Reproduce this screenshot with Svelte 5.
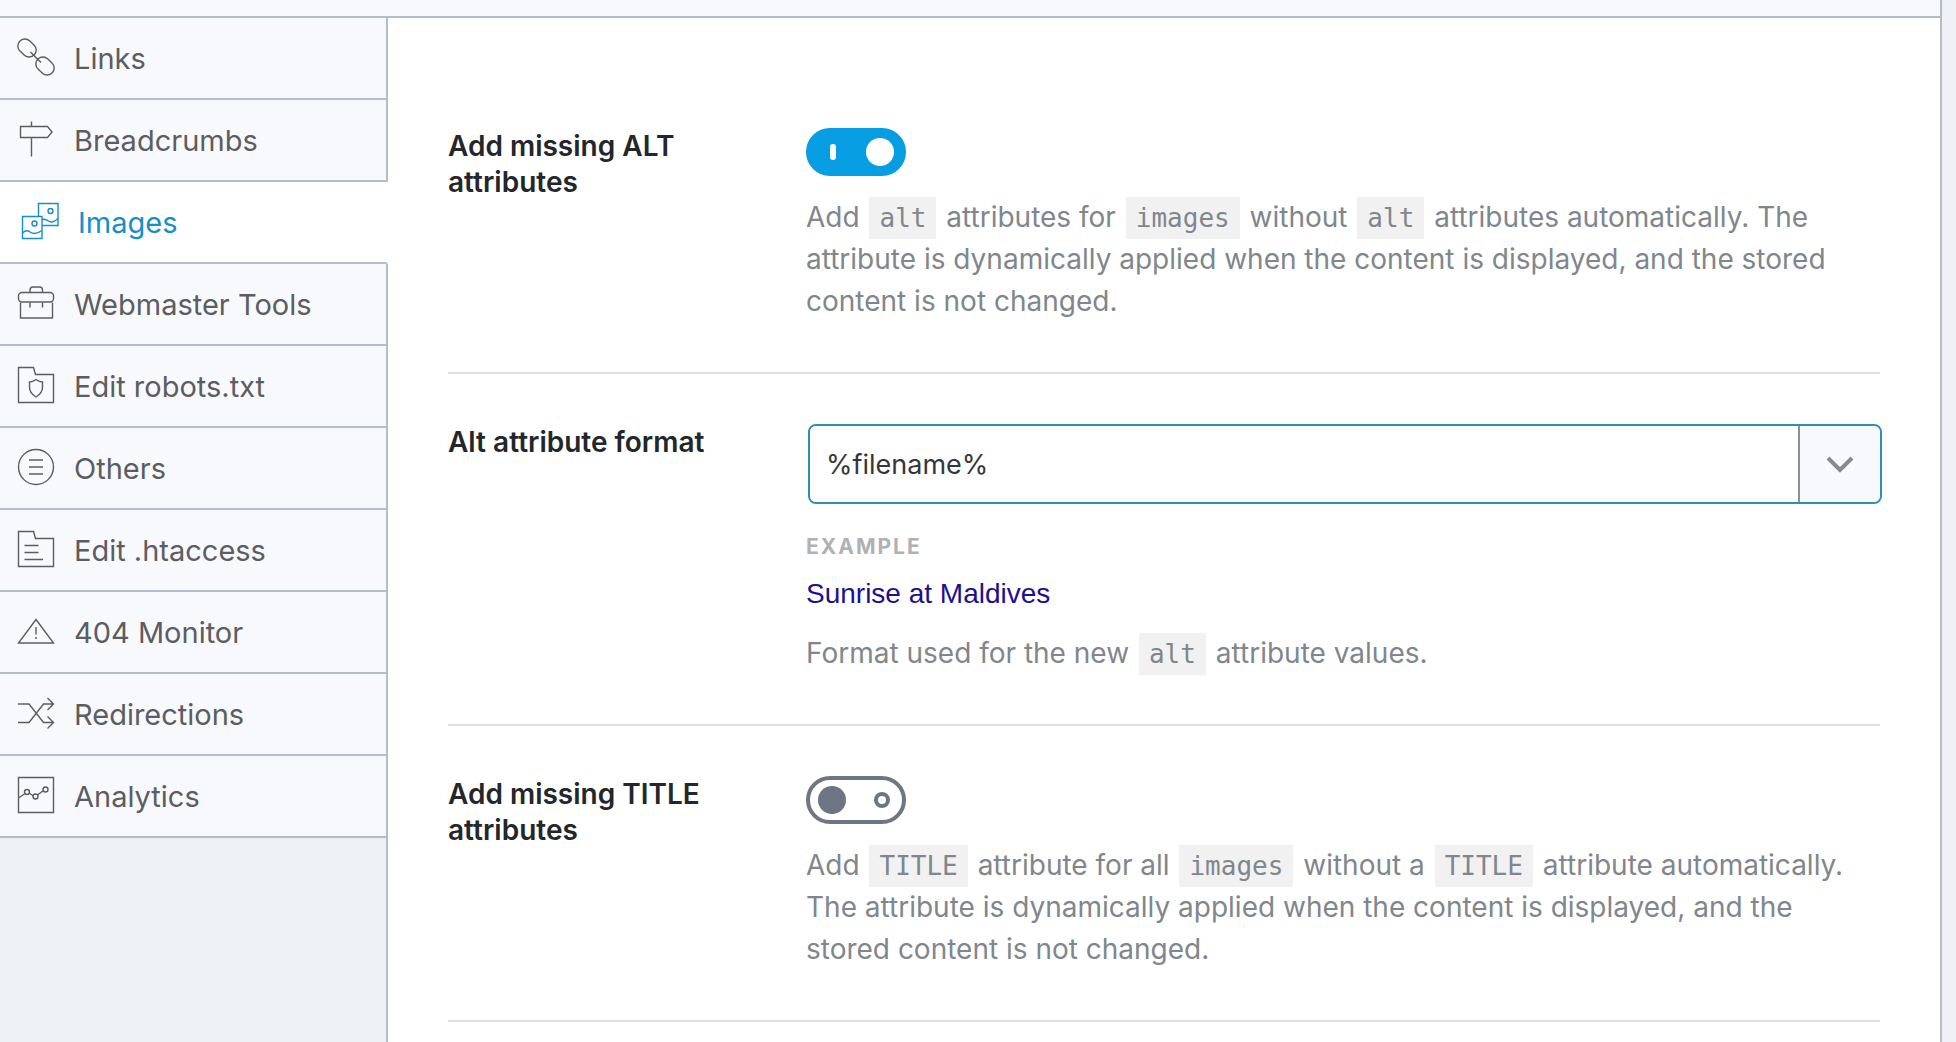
<script lang="ts">
    interface Tab {
        id: string;
        label: string;
    }

    const tabs: Tab[] = [
        { id: "links", label: "Links" },
        { id: "breadcrumbs", label: "Breadcrumbs" },
        { id: "images", label: "Images" },
        { id: "webmaster", label: "Webmaster Tools" },
        { id: "robots", label: "Edit robots.txt" },
        { id: "others", label: "Others" },
        { id: "htaccess", label: "Edit .htaccess" },
        { id: "404-monitor", label: "404 Monitor" },
        { id: "redirections", label: "Redirections" },
        { id: "analytics", label: "Analytics" },
    ];

    let activeTab = "images";
    let addAlt = true;
    let addTitle = false;
    let altFormat = "%filename%";
</script>

<div class="page">
    <div class="wrap">
        <header class="top-bar"></header>
        <div class="panel">
            <nav class="sidebar">
                {#each tabs as tab}
                    <a
                        href="#{tab.id}"
                        class="tab"
                        class:active={tab.id === activeTab}
                        on:click|preventDefault={() => (activeTab = tab.id)}
                    >
                        <svg class="icon" viewBox="0 0 36 36" aria-hidden="true">
                            {#if tab.id === "links"}
                                <rect x="-10" y="-7" width="20" height="14" rx="7" transform="translate(9 9) rotate(43)" />
                                <rect x="-10" y="-7" width="20" height="14" rx="7" transform="translate(27 27) rotate(43)" />
                                <path d="M12.500 13l10.500 10.500" />
                            {:else if tab.id === "breadcrumbs"}
                                <path d="M13.500 0.500v5M13.500 16.500v19M2.500 5.500h27l4.500 5.500-4.500 5.500h-27z" />
                            {:else if tab.id === "images"}
                                <path d="M0.500 13.500h19.500v22H0.500zM16.500 13.500V0.500h19.500v22H20" />
                                <circle cx="12.500" cy="20.500" r="2.500" />
                                <circle cx="28.500" cy="8" r="2.500" />
                                <path d="M0.500 30c3-3 5-3 7.500-1s7 2 12-1.500M20 16.500c3-1 4.500 0 6.500 1.500s5.500 1 9.500-2.500" />
                            {:else if tab.id === "webmaster"}
                                <path d="M2.500 17.500v15.500h32V17.500" />
                                <rect x="0.500" y="7.500" width="35" height="9.500" rx="3.500" />
                                <path d="M12 7.500V5q0-3 3-3h6.500q3 0 3 3v2.500M12 17.500v5M24.500 17.500v5" />
                            {:else if tab.id === "robots"}
                                <path d="M0.500 0.500h15l2 7H35.500v28H0.500z" />
                                <path d="M18 12.500c2 1.500 4 2.500 6.500 2.500v5c0 5-3 8-6.500 10-3.500-2-6.500-5-6.500-10v-5c2.500 0 4.500-1 6.500-2.500z" />
                            {:else if tab.id === "others"}
                                <circle cx="18" cy="18" r="17.500" />
                                <path d="M11 11h14M11 18h14M11 25h14" />
                            {:else if tab.id === "htaccess"}
                                <path d="M0.500 0.500h15l2 7H35.500v28H0.500zM6.500 14.500h14M6.500 21.500h14M6.500 28.500h18.500" />
                            {:else if tab.id === "404-monitor"}
                                <path d="M18 6.500L35.500 30H0.500zM18 14v7.500M18 24v2" />
                            {:else if tab.id === "redirections"}
                                <path d="M0 9h11l14.500 18.500h10M0 27.500h11L25.500 9h10M29.500 3l6 6-6 6M29.500 21.500l6 6-6 6" />
                            {:else}
                                <path d="M0.500 0.500h35v35H0.500zM0.500 21l6.500-4.500M11 16l4.500 3M19.500 18l6-4.500" />
                                <circle cx="9" cy="15" r="2.500" />
                                <circle cx="17.500" cy="19.500" r="2.500" />
                                <circle cx="27.500" cy="12.500" r="2.500" />
                            {/if}
                        </svg>
                        <span>{tab.label}</span>
                    </a>
                {/each}
            </nav>

            <main class="content">
                <section class="field">
                    <label class="name" for="add-alt">Add missing ALT attributes</label>
                    <div class="value">
                        <input id="add-alt" class="toggle" type="checkbox" bind:checked={addAlt} />
                        <p class="description">
                            Add <code>alt</code> attributes for <code>images</code> without
                            <code>alt</code> attributes automatically. The attribute is dynamically
                            applied when the content is displayed, and the stored content is not changed.
                        </p>
                    </div>
                </section>

                <section class="field">
                    <label class="name" for="alt-format">Alt attribute format</label>
                    <div class="value">
                        <div class="variable">
                            <input id="alt-format" type="text" bind:value={altFormat} />
                            <button type="button" aria-label="Insert variable">
                                <svg viewBox="0 0 28 18" aria-hidden="true">
                                    <path d="M2 3l12 12L26 3" />
                                </svg>
                            </button>
                        </div>
                        <div class="preview">
                            <h6>Example</h6>
                            <p>Sunrise at Maldives</p>
                        </div>
                        <p class="description">
                            Format used for the new <code>alt</code> attribute values.
                        </p>
                    </div>
                </section>

                <section class="field">
                    <label class="name" for="add-title">Add missing TITLE attributes</label>
                    <div class="value">
                        <input id="add-title" class="toggle" type="checkbox" bind:checked={addTitle} />
                        <p class="description">
                            Add <code>TITLE</code> attribute for all <code>images</code> without a
                            <code>TITLE</code> attribute automatically. The attribute is dynamically
                            applied when the content is displayed, and the stored content is not changed.
                        </p>
                    </div>
                </section>
            </main>
        </div>
    </div>
</div>

<style>
    :global(body) {
        margin: 0;
        background: #eff1f6;
    }
    .page {
        box-sizing: border-box;
        min-height: 100vh;
        padding-right: 14px;
        display: flex;
        font-family: Inter, "Liberation Sans", sans-serif;
    }
    .wrap {
        flex: 1;
        display: flex;
        flex-direction: column;
        border-right: 2px solid #b5bcc8;
    }
    .top-bar {
        height: 16px;
        background: #f8f9fc;
        border-bottom: 2px solid #b5bcc8;
    }
    .panel {
        flex: 1;
        display: flex;
        background: #fff;
    }
    .sidebar {
        flex: 0 0 388px;
        background: linear-gradient(90deg, #b5bfc8, #b5bfc8) right / 2px 100% no-repeat, #edf1f4;
    }
    .tab {
        box-sizing: border-box;
        height: 82px;
        padding: 0 18px;
        display: flex;
        align-items: center;
        gap: 20px;
        border-right: 2px solid #b5bcc8;
        border-bottom: 2px solid #b5bcc8;
        background: #f8f9fc;
        color: #5b5d62;
        font-size: 29px;
        line-height: 40px;
        text-decoration: none;
    }
    .tab span {
        padding-top: 2px;
    }
    .tab.active {
        padding-left: 22px;
        border-right-color: #fff;
        background: #fff;
        color: #148fcb;
    }
    .icon {
        width: 36px;
        height: 36px;
        margin-bottom: 2px;
        fill: none;
        stroke: currentColor;
        stroke-width: 1.4;
        overflow: visible;
    }
    .content {
        flex: 1;
        min-width: 0;
        padding: 60px 60px 0;
    }
    .field {
        display: flex;
        padding: 50px 0;
        border-bottom: 2px solid #dddee0;
    }
    .name {
        box-sizing: border-box;
        flex: 0 0 358px;
        padding-right: 90px;
        color: #23262a;
        font-size: 28px;
        font-weight: 600;
        line-height: 36px;
    }
    .value {
        flex: 1;
        min-width: 0;
    }
    .description {
        margin: 0;
        color: #7f868d;
        font-size: 28px;
        line-height: 42px;
    }
    code {
        padding: 6px 10px;
        margin: 0 2px;
        background: #f1f1f1;
        font-family: "DejaVu Sans Mono", monospace;
        font-size: 26px;
        line-height: 30px;
    }
    .toggle {
        appearance: none;
        box-sizing: border-box;
        display: flex;
        align-items: center;
        justify-content: space-between;
        width: 100px;
        height: 48px;
        margin: 0 0 20px;
        padding: 0 12px 0 8px;
        border: 4px solid #6d7683;
        border-radius: 24px;
        background: #fff;
    }
    .toggle::before {
        content: "";
        width: 28px;
        height: 28px;
        border-radius: 50%;
        background: #6d7683;
    }
    .toggle::after {
        content: "";
        box-sizing: border-box;
        width: 16px;
        height: 16px;
        border: 4px solid #6d7683;
        border-radius: 50%;
    }
    .toggle:checked {
        padding: 0 8px 0 20px;
        border-color: #069de3;
        background: #069de3;
    }
    .toggle:checked::before {
        width: 6px;
        height: 16px;
        border-radius: 3px;
        background: #fff;
    }
    .toggle:checked::after {
        width: 28px;
        height: 28px;
        border: 0;
        background: #fff;
    }
    .variable {
        box-sizing: border-box;
        display: flex;
        height: 80px;
        margin: 0 -2px 28px 2px;
        border: 2px solid #2b8fb9;
        border-radius: 8px;
        overflow: hidden;
    }
    .variable input {
        flex: 1;
        min-width: 0;
        padding: 0 16px;
        border: 0;
        outline: 0;
        background: #fff;
        color: #32373c;
        font-family: inherit;
        font-size: 27px;
    }
    .variable button {
        width: 82px;
        padding: 0;
        display: flex;
        align-items: center;
        justify-content: center;
        border: 0;
        border-left: 2px solid #8a9096;
        background: #f8f9fc;
    }
    .variable svg {
        width: 28px;
        height: 18px;
        fill: none;
        stroke: #86898d;
        stroke-width: 4;
    }
    .preview {
        margin-bottom: 18px;
    }
    .preview h6 {
        margin: 0 0 12px;
        color: #b0b1b2;
        font-size: 21px;
        font-weight: 700;
        line-height: 30px;
        letter-spacing: 2px;
        text-transform: uppercase;
    }
    .preview p {
        margin: 0;
        color: #1e0f91;
        font-family: "Liberation Sans", Arial, sans-serif;
        font-size: 28px;
        line-height: 40px;
    }
</style>
